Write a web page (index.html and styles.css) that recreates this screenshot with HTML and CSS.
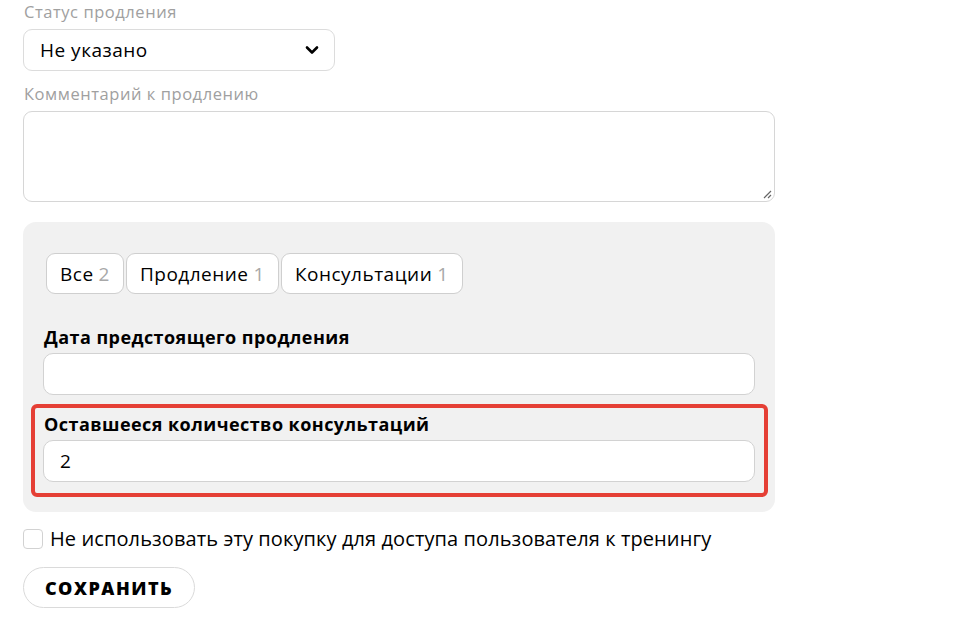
FILE: index.html
```html
<!DOCTYPE html>
<html lang="ru">
<head>
<meta charset="utf-8">
<link rel="stylesheet" href="styles.css">
</head>
<body>
<form class="form">
  <div class="field">
    <label class="label-muted">Статус продления</label>
    <div class="select">
      <span>Не указано</span>
      <svg class="chevron" width="14" height="10" viewBox="0 0 14 10"><path d="M2 2.5 L7 7.5 L12 2.5" fill="none" stroke="#000" stroke-width="2.6" stroke-linecap="round" stroke-linejoin="round"/></svg>
    </div>
  </div>
  <div class="field">
    <label class="label-muted">Комментарий к продлению</label>
    <div class="textarea">
      <svg class="grip" width="10" height="10" viewBox="0 0 10 10"><path d="M9 2 L2 9 M9 6 L6 9" stroke="#666" stroke-width="1.2"/></svg>
    </div>
  </div>
  <div class="panel">
    <div class="tabs">
      <div class="tab">Все <span class="count">2</span></div>
      <div class="tab">Продление <span class="count">1</span></div>
      <div class="tab">Консультации <span class="count">1</span></div>
    </div>
    <div class="pfield">
      <label class="label-bold">Дата предстоящего продления</label>
      <div class="input"></div>
    </div>
    <div class="pfield highlight">
      <label class="label-bold">Оставшееся количество консультаций</label>
      <div class="input">2</div>
    </div>
  </div>
  <label class="check">
    <span class="box"></span>
    <span>Не использовать эту покупку для доступа пользователя к тренингу</span>
  </label>
  <button type="button" class="save">СОХРАНИТЬ</button>
</form>
</body>
</html>
```
FILE: styles.css
```css
* { box-sizing: border-box; }
html, body { margin: 0; background: #fff; }
body {
  font-family: "Open Sans", "Noto Sans", sans-serif;
  color: #000;
}
.form {
  padding: 1px 0 0 23px;
  width: 775px;
  display: flex;
  flex-direction: column;
}
.field { display: flex; flex-direction: column; }
.label-muted {
  color: #a0a0a0;
  font-size: 16.5px;
  letter-spacing: 0.55px;
  line-height: 22px;
  padding-left: 1px;
  margin-bottom: 6px;
}
.select {
  width: 312px;
  height: 42px;
  border: 1px solid #dcdcdc;
  border-radius: 9px;
  display: flex;
  align-items: center;
  justify-content: space-between;
  padding: 0 15px 0 16px;
  font-size: 19px;
  letter-spacing: 0.5px;
  margin-bottom: 12px;
}
.chevron { display: block; }
.textarea {
  height: 91px;
  border: 1px solid #d6d6d6;
  border-radius: 9px;
  position: relative;
}
.grip { position: absolute; right: 2px; bottom: 2px; }
.panel {
  margin-top: 20px;
  background: #f1f1f1;
  border-radius: 13px;
  padding: 31px 20px 15px 20px;
  display: flex;
  flex-direction: column;
}
.tabs { display: flex; gap: 2px; padding-left: 3px; margin-bottom: 31px; }
.tab {
  background: #fff;
  border: 1px solid #cfcfcf;
  border-radius: 9px;
  height: 41px;
  padding: 0 13px;
  display: flex;
  align-items: center;
  font-size: 19px;
  letter-spacing: 0.5px;
}
.count { color: #a8a8a8; margin-left: 5px; }
.pfield { display: flex; flex-direction: column; }
.label-bold {
  font-weight: 700;
  font-size: 18px;
  letter-spacing: 0.45px;
  line-height: 24px;
  padding-left: 1px;
  margin-bottom: 4px;
}
.input {
  height: 42px;
  background: #fff;
  border: 1px solid #d2d2d2;
  border-radius: 10px;
  padding: 0 16px;
  display: flex;
  align-items: center;
  font-size: 19px;
}
.highlight {
  margin: 9px -13px 0 -12px;
  border: 4px solid #e53f35;
  border-radius: 6px;
  padding: 4px 9px 11px 8px;
}
.check {
  display: flex;
  align-items: center;
  gap: 7px;
  margin-top: 14px;
  font-size: 20px;
  letter-spacing: 0.1px;
  line-height: 26px;
}
.box {
  width: 20px;
  height: 20px;
  border: 1px solid #d2d2d2;
  border-radius: 4px;
  background: #fff;
}
.save {
  margin-top: 15px;
  align-self: flex-start;
  width: 172px;
  height: 41px;
  background: #fff;
  border: 1px solid #dadada;
  border-radius: 21px;
  font-family: inherit;
  font-weight: 800;
  font-size: 18px;
  letter-spacing: 1.5px;
  color: #000;
}
```
